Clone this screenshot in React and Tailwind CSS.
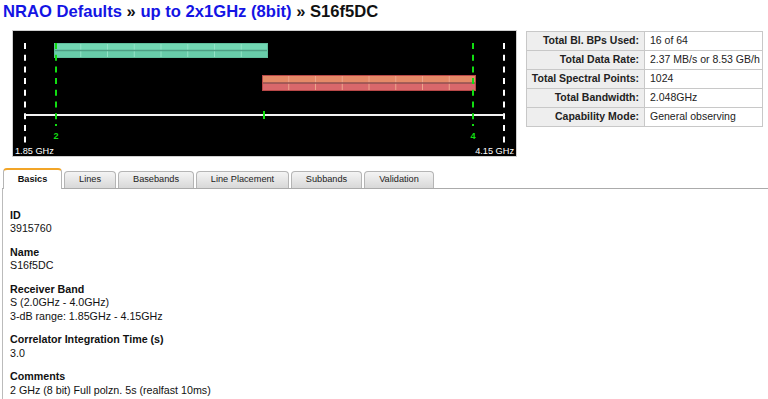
import React from 'react';

const stats = [
  ['Total Bl. BPs Used:', '16 of 64'],
  ['Total Data Rate:', '2.37 MB/s or 8.53 GB/h'],
  ['Total Spectral Points:', '1024'],
  ['Total Bandwidth:', '2.048GHz'],
  ['Capability Mode:', 'General observing'],
];

const tabs = [
  { label: 'Basics', w: 'w-[59px]', active: true },
  { label: 'Lines', w: 'w-[52px]' },
  { label: 'Basebands', w: 'w-[76px]' },
  { label: 'Line Placement', w: 'w-[93px]' },
  { label: 'Subbands', w: 'w-[71px]' },
  { label: 'Validation', w: 'w-[70px]' },
];

const fields = [
  ['ID', ['3915760']],
  ['Name', ['S16f5DC']],
  ['Receiver Band', ['S (2.0GHz - 4.0GHz)', '3-dB range: 1.85GHz - 4.15GHz']],
  ['Correlator Integration Time (s)', ['3.0']],
  ['Comments', ['2 GHz (8 bit) Full polzn. 5s (realfast 10ms)']],
];

// spectral window bar, split in 8 subband cells
function Band({ x, y, w, h, top, bottom, mid, edge, seg }) {
  const cells = [];
  for (let i = 1; i < 8; i++) {
    const sx = x + (w / 8) * i;
    cells.push(<line key={i} x1={sx} y1={y} x2={sx} y2={y + h} stroke={seg} strokeWidth="1" />);
  }
  return (
    <g>
      <rect x={x} y={y} width={w} height={h / 2} fill={top} />
      <rect x={x} y={y + h / 2} width={w} height={h / 2} fill={bottom} />
      {cells}
      <line x1={x} y1={y + h / 2} x2={x + w} y2={y + h / 2} stroke={mid} strokeWidth="1.5" />
      <rect x={x + 0.5} y={y + 0.5} width={w - 1} height={h - 1} fill="none" stroke={edge} strokeWidth="1" />
    </g>
  );
}

function Spectrum() {
  return (
    <svg width="503" height="125" className="block bg-black" style={{ fontFamily: '"Liberation Sans", Arial, sans-serif' }}>
      <line x1="12" y1="12" x2="12" y2="113" stroke="#fff" strokeWidth="2" strokeDasharray="6 5.7" />
      <line x1="491" y1="12" x2="491" y2="113" stroke="#fff" strokeWidth="2" strokeDasharray="6 5.7" />
      <line x1="12" y1="84" x2="491" y2="84" stroke="#f2f2f2" strokeWidth="2" />

      <Band x={41} y={12} w={214} h={15} top="#72d7b3" bottom="#68ccaa" mid="#4d9e84" edge="#5fbd9c" seg="#92e3c6" />
      <Band x={249} y={44} w={214} h={16} top="#e58a68" bottom="#d9686b" mid="#8f5050" edge="#b84848" seg="#eea58c" />

      <line x1="43" y1="12" x2="43" y2="89" stroke="#11dd11" strokeWidth="2" strokeDasharray="6 5.7" />
      <line x1="43" y1="93" x2="43" y2="95" stroke="#11dd11" strokeWidth="2" />
      <text x="43" y="107.5" fill="#11dd11" fontSize="9.2" fontWeight="bold" textAnchor="middle">2</text>

      <line x1="460" y1="12" x2="460" y2="89" stroke="#11dd11" strokeWidth="2" strokeDasharray="6 5.7" />
      <line x1="460" y1="93" x2="460" y2="95" stroke="#11dd11" strokeWidth="2" />
      <text x="460" y="107.5" fill="#11dd11" fontSize="9.2" fontWeight="bold" textAnchor="middle">4</text>

      <line x1="251" y1="80" x2="251" y2="88" stroke="#11dd11" strokeWidth="2" />

      <text x="2" y="122.5" fill="#fff" fontSize="9.2">1.85 GHz</text>
      <text x="501" y="122.5" fill="#fff" fontSize="9.2" textAnchor="end">4.15 GHz</text>
    </svg>
  );
}

export default function App() {
  return (
    <div className="h-[399px] overflow-hidden bg-white text-[#111] font-['Liberation_Sans',Arial,sans-serif]">
      <h1 className="pl-[3px] pt-[2px] text-[16.6px] font-bold leading-[19px]">
        <a className="text-[#1414e4]">NRAO Defaults</a>
        <span> » </span>
        <a className="text-[#1414e4]">up to 2x1GHz (8bit)</a>
        <span> » S16f5DC</span>
      </h1>

      <div className="mt-[9px] flex items-start">
        <div className="ml-[12px] border border-[#cfcfcf]">
          <Spectrum />
        </div>
        <table className="ml-[9px] mt-[1px] border-collapse border border-[#c8c8c8] text-[10.5px] text-[#222]">
          <tbody>
            {stats.map(([k, v]) => (
              <tr key={k} className="h-[19px]">
                <td className="w-[118px] border border-[#c8c8c8] bg-[#eeeeee] pr-[5px] text-right font-bold">{k}</td>
                <td className="w-[118px] border border-[#c8c8c8] pl-[5px] whitespace-nowrap">{v}</td>
              </tr>
            ))}
          </tbody>
        </table>
      </div>

      <div className="mt-[12px] ml-[2px] flex h-[20px] items-end gap-[2px] border-b border-[#ababab] pl-[1px]">
        {tabs.map((t) =>
          t.active ? (
            <div
              key={t.label}
              className={`${t.w} -mb-px flex h-[21px] items-center justify-center rounded-t-[4px] border-x border-t-2 border-x-[#b5b5b5] border-t-[#f2a528] bg-white text-[9.2px] font-bold`}
            >
              {t.label}
            </div>
          ) : (
            <div
              key={t.label}
              className={`${t.w} flex h-[17px] items-center justify-center rounded-t-[4px] border-x border-t border-[#b5b5b5] bg-gradient-to-b from-[#f4f4f4] to-[#d8d8d8] text-[9.2px] text-[#222]`}
            >
              {t.label}
            </div>
          )
        )}
      </div>

      <div className="ml-[2px] flex h-full flex-col gap-[10px] border-l border-[#bbbbbb] pl-[7px] pt-[19.5px] text-[10.7px] leading-[13.5px] text-[#111]">
        {fields.map(([label, values]) => (
          <div key={label}>
            <div className="font-bold">{label}</div>
            {values.map((v) => (
              <div key={v}>{v}</div>
            ))}
          </div>
        ))}
      </div>
    </div>
  );
}
